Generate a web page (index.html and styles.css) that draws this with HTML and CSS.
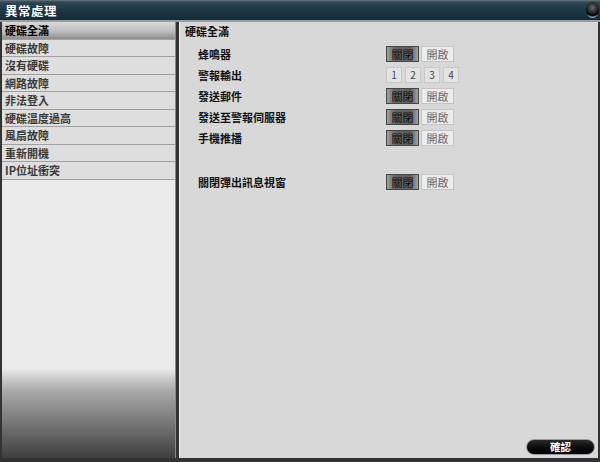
FILE: index.html
```html
<!DOCTYPE html>
<html lang="zh-Hant">
<head>
  <meta charset="UTF-8" />
  <title>異常處理</title>
  <link rel="stylesheet" href="styles.css">
</head>
<body>
  <div class="window">
    <div class="titlebar">
      <span class="title">異常處理</span>
      <span class="close-ball"></span>
    </div>

    <div class="main">
      <ul class="side-list">
        <li class="active">硬碟全滿</li>
        <li>硬碟故障</li>
        <li>沒有硬碟</li>
        <li>網路故障</li>
        <li>非法登入</li>
        <li>硬碟溫度過高</li>
        <li>風扇故障</li>
        <li>重新開機</li>
        <li>IP位址衝突</li>
      </ul>

      <div class="panel">
        <h3 class="panel-title">硬碟全滿</h3>

        <div class="row">
          <span class="label">蜂鳴器</span>
          <div class="toggle">
            <span class="btn on">關閉</span>
            <span class="btn">開啟</span>
          </div>
        </div>
        <div class="row">
          <span class="label">警報輸出</span>
          <div class="nums">
            <span class="num">1</span>
            <span class="num">2</span>
            <span class="num">3</span>
            <span class="num">4</span>
          </div>
        </div>
        <div class="row">
          <span class="label">發送郵件</span>
          <div class="toggle">
            <span class="btn on">關閉</span>
            <span class="btn">開啟</span>
          </div>
        </div>
        <div class="row">
          <span class="label">發送至警報伺服器</span>
          <div class="toggle">
            <span class="btn on">關閉</span>
            <span class="btn">開啟</span>
          </div>
        </div>
        <div class="row">
          <span class="label">手機推播</span>
          <div class="toggle">
            <span class="btn on">關閉</span>
            <span class="btn">開啟</span>
          </div>
        </div>

        <div class="row row-gap">
          <span class="label">關閉彈出訊息視窗</span>
          <div class="toggle">
            <span class="btn on">關閉</span>
            <span class="btn">開啟</span>
          </div>
        </div>

        <div class="footer">
          <button class="ok-btn">確認</button>
        </div>
      </div>
    </div>
  </div>
</body>
</html>
```

FILE: styles.css
```css
html, body {
  margin: 0;
  padding: 0;
}
body {
  width: 600px;
  height: 462px;
  overflow: hidden;
  background: #2b2b2b;
  font-family: "Noto Sans CJK TC", "Noto Sans", sans-serif;
}
.window {
  display: flex;
  flex-direction: column;
  height: 462px;
}
.titlebar {
  height: 20px;
  display: flex;
  align-items: center;
  justify-content: space-between;
  background: linear-gradient(to bottom, #6b777c 0, #2f4856 2px, #1e3746 50%, #152b38 100%);
  border-bottom: 2px solid #9a9d9f;
}
.title {
  color: #fff;
  font-size: 12.5px;
  font-weight: bold;
  padding-left: 5px;
  letter-spacing: 0.5px;
  text-shadow: 0 0 1px #000;
}
.close-ball {
  width: 13px;
  height: 16px;
  margin-right: 1px;
  border-radius: 50%;
  background: radial-gradient(circle at 50% 35%, #6a6a6a 0, #1a1a1a 50%, #000 64%, #9a9a9a 78%, #e0e0e0 100%);
}
.main {
  flex: 1;
  display: flex;
  padding: 0 2px 4px 2px;
  background: #333;
}
.side-list {
  list-style: none;
  margin: 0;
  padding: 0;
  width: 173px;
  border-right: 1px solid #8a8a8a;
  background: linear-gradient(to bottom, #ebebeb 0, #ebebeb 79.5%, #c9c9c9 82%, #a9a9a9 84.5%, #7a7a7a 91.5%, #3e3e3e 100%);
}
.side-list li {
  height: 16.5px;
  line-height: 16.5px;
  padding-left: 3px;
  font-size: 11px;
  font-weight: bold;
  color: #3a3a3a;
  background: #dedede;
  border-bottom: 1px solid #a0a0a0;
}
.side-list li.active {
  color: #000;
  background: linear-gradient(to bottom, #d9d9d9 0, #bdbdbd 55%, #8d8d8d 100%);
}
.panel {
  flex: 1;
  margin-left: 3px;
  display: flex;
  flex-direction: column;
  background: #d8d8d8;
  border-left: 1px solid #f0f0f0;
  padding-left: 5px;
}
.panel-title {
  margin: 1px 0 4px 0;
  height: 16px;
  line-height: 16px;
  font-size: 11px;
  font-weight: bold;
  color: #111;
}
.row {
  display: flex;
  align-items: center;
  height: 21px;
  padding-left: 13px;
}
.row-gap {
  margin-top: 23px;
}
.label {
  width: 188px;
  font-size: 11px;
  font-weight: bold;
  color: #111;
}
.toggle {
  display: flex;
  gap: 2px;
}
.btn {
  width: 31px;
  height: 14px;
  line-height: 14px;
  text-align: center;
  font-size: 11px;
  color: #6a6a6a;
  background: #ececec;
  border: 1px solid #c4c4c4;
}
.btn.on {
  color: #0a0a0a;
  border-color: #444;
  background: linear-gradient(to right, #a0a0a0 0, #666 25%, #5e5e5e 75%, #a0a0a0 100%);
}
.nums {
  display: flex;
  gap: 3px;
}
.num {
  width: 14px;
  height: 14px;
  line-height: 14px;
  text-align: center;
  font-size: 10px;
  color: #444;
  background: #e3e3e3;
  border: 1px solid #c8c8c8;
}
.footer {
  margin-top: auto;
  display: flex;
  justify-content: flex-end;
  padding: 0 3px 3px 0;
}
.ok-btn {
  width: 69px;
  height: 16px;
  padding: 0;
  border: 1px solid #9a9a9a;
  border-radius: 8px;
  background: linear-gradient(to bottom, #2a2a2a 0, #080808 60%, #000 100%);
  color: #fff;
  font-family: "Noto Sans CJK TC", "Noto Sans", sans-serif;
  font-size: 10.5px;
  font-weight: bold;
  line-height: 14px;
}
```
